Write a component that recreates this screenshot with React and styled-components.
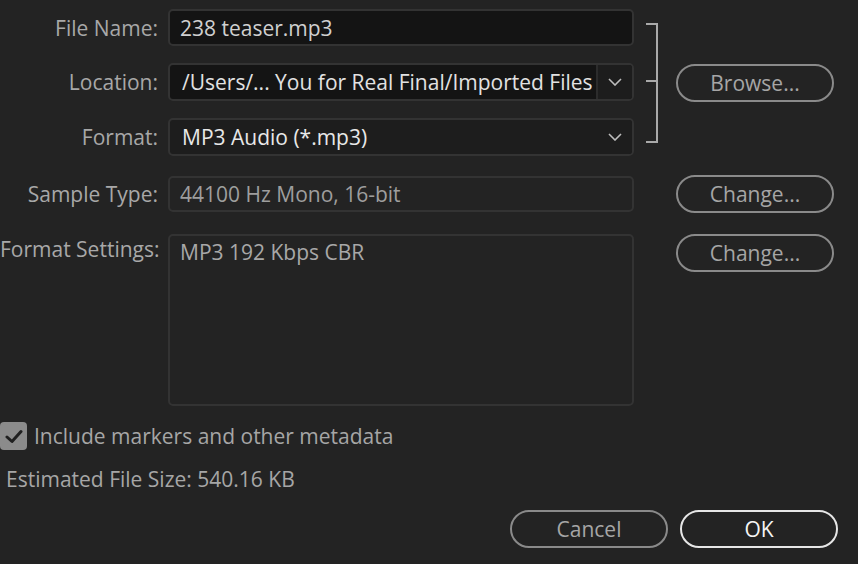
import React from 'react';
import styled, { createGlobalStyle } from 'styled-components';

const GlobalStyle = createGlobalStyle`
  html, body {
    margin: 0;
    padding: 0;
    background: #232323;
  }
  body {
    font-family: "Open Sans", "Noto Sans", sans-serif;
    font-size: 21px;
    color: #a6a6a6;
  }
`;

const Dialog = styled.div`
  width: 858px;
  height: 564px;
  box-sizing: border-box;
  padding-top: 9px;
  display: flex;
  flex-direction: column;
  overflow: hidden;
`;

const Group = styled.div`
  display: flex;
  align-items: center;
`;

const Fields = styled.div`
  display: flex;
  flex-direction: column;
  gap: 17px;
`;

const Row = styled.div`
  display: flex;
  align-items: ${(p) => (p.$top ? 'flex-start' : 'center')};
  margin-top: ${(p) => p.$mt || 0}px;
`;

const Label = styled.div`
  width: 158px;
  flex: none;
  text-align: right;
  white-space: nowrap;
  color: #a8a8a8;
  margin-right: 10px;
  line-height: ${(p) => (p.$top ? '30px' : 'normal')};
`;

const Field = styled.div`
  width: 466px;
  height: ${(p) => p.$h || 37}px;
  box-sizing: border-box;
  border: 2px solid #333;
  border-radius: 5px;
  background: ${(p) => p.$bg || 'transparent'};
  color: ${(p) => p.$color || '#d2d2d2'};
  display: flex;
  align-items: ${(p) => (p.$top ? 'flex-start' : 'center')};
  padding-left: ${(p) => p.$pl || 10}px;
  padding-top: ${(p) => (p.$top ? 2 : 0)}px;
  white-space: nowrap;
  overflow: hidden;
`;

const FieldText = styled.span`
  flex: 1;
  overflow: hidden;
`;

const DropZone = styled.div`
  width: 34px;
  height: 100%;
  flex: none;
  display: flex;
  align-items: center;
  justify-content: center;
  background: #1d1d1d;
  border-left: ${(p) => (p.$split ? '2px solid #2c2c2c' : 'none')};
`;

const Bracket = styled.div`
  position: relative;
  width: 10px;
  height: 116px;
  margin-left: 12px;
  border: 2px solid #a9a9a9;
  border-left: none;

  &::after {
    content: '';
    position: absolute;
    left: 0;
    top: 55px;
    width: 10px;
    height: 2px;
    background: #a9a9a9;
  }
`;

const PillButton = styled.button`
  width: 158px;
  height: 38px;
  box-sizing: border-box;
  border: 2px solid ${(p) => (p.$primary ? '#e6e6e6' : '#8a8a8a')};
  border-radius: 20px;
  background: transparent;
  color: ${(p) => (p.$primary ? '#f4f4f4' : '#a6a6a6')};
  font-family: "Open Sans", "Noto Sans", sans-serif;
  font-size: 21px;
  padding: 0;
  margin-left: ${(p) => p.$ml || 0}px;
  flex: none;
`;

const CheckRow = styled.div`
  display: flex;
  align-items: center;
  margin-top: 16px;
  gap: 7px;
`;

const CheckBox = styled.div`
  width: 27px;
  height: 28px;
  border-radius: 4px;
  background: #8b8b8b;
  display: flex;
  align-items: center;
  justify-content: center;
`;

const Estimate = styled.div`
  margin-top: 15px;
  padding-left: 6px;
`;

const Footer = styled.div`
  display: flex;
  justify-content: flex-end;
  gap: 12px;
  padding-right: 20px;
  margin-top: 17px;
`;

const Chevron = () => (
  <svg width="14" height="8" viewBox="0 0 14 8">
    <polyline points="1,1 7,7 13,1" fill="none" stroke="#bdbdbd" strokeWidth="1.6" />
  </svg>
);

const Check = () => (
  <svg width="18" height="15" viewBox="0 0 18 15">
    <polyline points="2,8 7,12.5 16,2.5" fill="none" stroke="#1f1f1f" strokeWidth="3" strokeLinecap="round" strokeLinejoin="round" />
  </svg>
);

export default function App() {
  return (
    <>
      <GlobalStyle />
      <Dialog>
        <Group>
          <Fields>
            <Row>
              <Label>File Name:</Label>
              <Field $bg="#141414" $color="#d0d0d0">238 teaser.mp3</Field>
            </Row>
            <Row>
              <Label>Location:</Label>
              <Field $bg="#141414" $color="#e2e2e2" $pl={12} $h={38}>
                <FieldText>/Users/... You for Real Final/Imported Files</FieldText>
                <DropZone $split>
                  <Chevron />
                </DropZone>
              </Field>
            </Row>
            <Row>
              <Label>Format:</Label>
              <Field $bg="#1d1d1d" $color="#e8e8e8" $pl={12} $h={38}>
                <FieldText>MP3 Audio (*.mp3)</FieldText>
                <DropZone>
                  <Chevron />
                </DropZone>
              </Field>
            </Row>
          </Fields>
          <Bracket />
          <PillButton $ml={18}>Browse...</PillButton>
        </Group>

        <Row $mt={19}>
          <Label>Sample Type:</Label>
          <Field $color="#9e9e9e" $h={36}>44100 Hz Mono, 16-bit</Field>
          <PillButton $ml={42}>Change...</PillButton>
        </Row>

        <Row $mt={21} $top>
          <Label $top>Format Settings:</Label>
          <Field $color="#a8a8a8" $h={172} $top>MP3 192 Kbps CBR</Field>
          <PillButton $ml={42}>Change...</PillButton>
        </Row>

        <CheckRow>
          <CheckBox>
            <Check />
          </CheckBox>
          <span>Include markers and other metadata</span>
        </CheckRow>

        <Estimate>Estimated File Size: 540.16 KB</Estimate>

        <Footer>
          <PillButton>Cancel</PillButton>
          <PillButton $primary>OK</PillButton>
        </Footer>
      </Dialog>
    </>
  );
}
